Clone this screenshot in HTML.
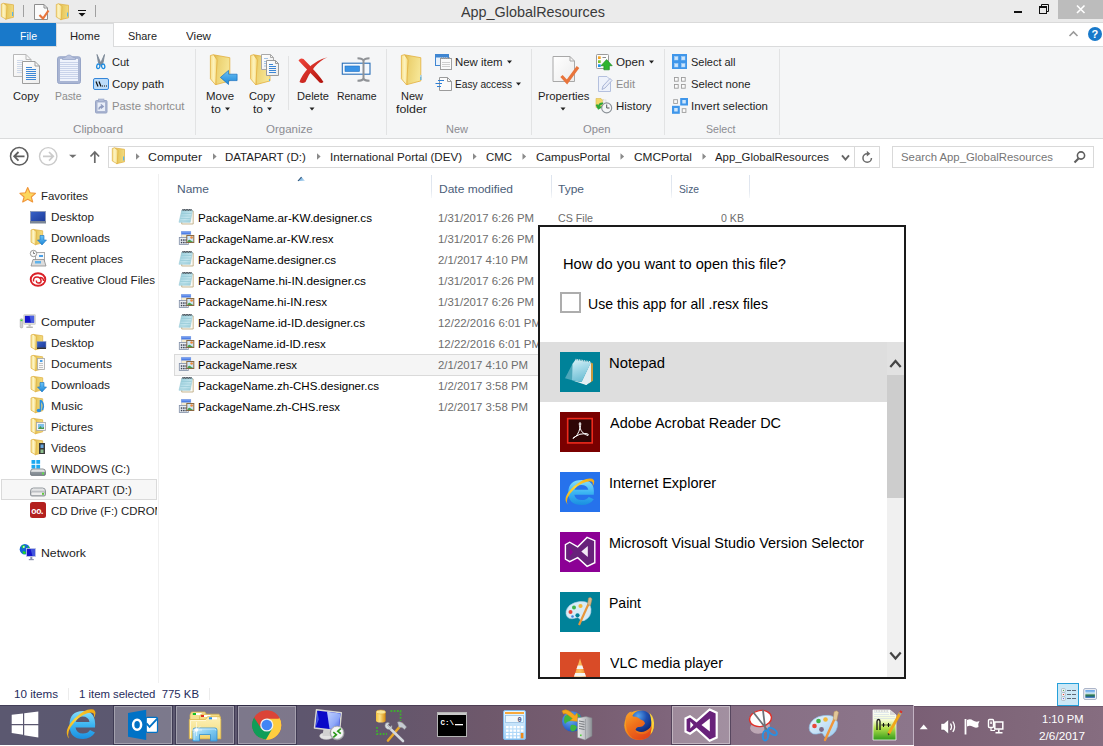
<!DOCTYPE html>
<html lang="en">
<head>
<meta charset="utf-8">
<title>App_GlobalResources</title>
<style>
html,body{margin:0;padding:0;}
body{width:1103px;height:746px;position:relative;overflow:hidden;background:#fff;font-family:"Liberation Sans",sans-serif;font-size:12px;}
.t{position:absolute;white-space:pre;line-height:20px;height:20px;transform-origin:0 50%;}
.abs{position:absolute;}
#titlebar{left:0;top:0;width:1103px;height:22px;background:#ebebeb;}
#tabrow{left:0;top:22px;width:1103px;height:25px;background:#fff;border-top:1px solid #dadada;box-sizing:border-box;}
#filetab{left:0;top:23px;width:56px;height:23px;background:#1979ca;}
#hometab{left:56px;top:23px;width:58px;height:24px;background:#f5f6f7;border:1px solid #dadbdc;border-bottom:none;box-sizing:border-box;}
#ribbon{left:0;top:46px;width:1103px;height:93px;background:#f5f6f7;border-top:1px solid #dadbdc;border-bottom:1px solid #dadbdc;box-sizing:border-box;}
.rsep{position:absolute;top:49px;width:1px;height:86px;background:#e2e3e4;}
#addrbox{left:108px;top:146px;width:772px;height:22px;border:1px solid #d9d9d9;box-sizing:border-box;background:#fff;}
#searchbox{left:892px;top:146px;width:202px;height:22px;border:1px solid #d9d9d9;box-sizing:border-box;background:#fff;}
#navsep{left:158px;top:174px;width:1px;height:509px;background:#f0f0f0;}
.hsep{position:absolute;top:175px;width:1px;height:23px;background:linear-gradient(180deg,#dde4ee 0%,#e3e8f0 70%,#f6f8fa 100%);}
#selrow{left:174px;top:354px;width:400px;height:22px;background:#f5f5f5;border:1px solid #dadada;box-sizing:border-box;}
#navsel{left:1px;top:479px;width:156px;height:21px;background:#f7f7f7;border:1px solid #dadada;box-sizing:border-box;}
#dialog{left:538px;top:225px;width:368px;height:454px;border:2px solid #1a1a1a;box-sizing:border-box;background:#fff;overflow:hidden;}
#dlgsel{left:540px;top:342px;width:347px;height:60px;background:#dedede;}
#sbtrack{left:887px;top:342px;width:17px;height:335px;background:#f0f0f0;}
#sbthumb{left:887px;top:375px;width:17px;height:123px;background:#cdcdcd;}
#sbup{left:887px;top:342px;width:17px;height:33px;background:#e1e1e1;}
#chk{left:560px;top:292px;width:21px;height:21px;border:2px solid #adadad;box-sizing:border-box;background:#fff;}
.appico{position:absolute;left:560px;width:40px;height:40px;}
#status{left:0;top:683px;width:1103px;height:22px;background:#fff;}
#taskbar{left:0;top:705px;width:914px;height:40px;background:linear-gradient(90deg,#5b5870 0%,#5c5870 20%,#5e566e 33%,#63566c 42%,#6e586b 53%,#775d71 64%,#7f657b 73%,#866e84 81%,#8b7489 94%,#8c768b 100%);}
#taskbar2{left:914px;top:706px;width:189px;height:40px;background:linear-gradient(90deg,#7a5f75 0%,#80677a 55%,#866d80 100%);}
.tbtn{position:absolute;top:706px;width:58px;height:38px;box-sizing:border-box;}
.tbtn.run{background:rgba(255,255,255,0.2);border:1px solid rgba(255,255,255,0.3);box-shadow:0 0 0 1px rgba(25,20,45,0.42);}
.tbtn.act{background:rgba(255,255,255,0.24);border:1px solid rgba(255,255,255,0.36);}
svg{position:absolute;overflow:visible;}
</style>
</head>
<body>
<div class="abs" id="titlebar"></div>
<div class="abs" id="tabrow"></div>
<div class="abs" id="ribbon"></div>
<div class="abs" id="filetab"></div>
<div class="abs" id="hometab"></div>
<div class="rsep" style="left:195px"></div>
<div class="rsep" style="left:386px"></div>
<div class="rsep" style="left:531px"></div>
<div class="rsep" style="left:664px"></div>
<div class="rsep" style="left:779px"></div>
<div class="rsep" style="left:288px;top:56px;height:54px"></div>
<svg width="110" height="23" style="left:0;top:0" viewBox="0 0 110 23">
<defs>
<linearGradient id="sfa" x1="0" y1="0" x2="1" y2="0"><stop offset="0" stop-color="#f6e08c"/><stop offset="0.450" stop-color="#fdf4c4"/><stop offset="1" stop-color="#f1d570"/></linearGradient>
<linearGradient id="sfb" x1="0" y1="0" x2="1" y2="0"><stop offset="0" stop-color="#d3ab3c"/><stop offset="0.300" stop-color="#e6c75c"/><stop offset="1" stop-color="#f2db80"/></linearGradient>
<linearGradient id="fg1" x1="0" y1="0" x2="1" y2="0"><stop offset="0" stop-color="#fdf6c5"/><stop offset="1" stop-color="#efd468"/></linearGradient>
<linearGradient id="fg2" x1="0" y1="0" x2="0" y2="1"><stop offset="0" stop-color="#f3d976"/><stop offset="1" stop-color="#dfb53e"/></linearGradient>
</defs>
<g id="tfold">
<path d="M3.500 3.400 L13.500 4.800 V17.300 L5.500 19.200 Z" fill="url(#sfb)" stroke="#dfae3e" stroke-width="0.700" stroke-linejoin="round"/>
<path d="M1.300 4 L3.500 3.300 L7 5.700 L6.200 19.300 L1.300 16.500 Z" fill="url(#sfa)" stroke="#e0b042" stroke-width="0.700" stroke-linejoin="round"/>
<rect x="12" y="12" width="1.200" height="4" fill="#5db4e6"/>
</g>
<rect x="23" y="5" width="1" height="12" fill="#a0a0a0"/>
<path d="M34.5 4.500 H44 L47.500 8 V19.500 H34.500 Z" fill="#fbfbfb" stroke="#8e8e8e" stroke-width="1"/>
<path d="M44 4.500 V8 H47.500" fill="none" stroke="#8e8e8e" stroke-width="1"/>
<path d="M39.5 15 L43 18.500 L48.500 10.500" fill="none" stroke="#e8743b" stroke-width="2.200"/>
<g transform="translate(55,0.500)">
<path d="M3.500 3.400 L13.500 4.800 V17.300 L5.500 19.200 Z" fill="url(#sfb)" stroke="#dfae3e" stroke-width="0.700" stroke-linejoin="round"/>
<path d="M1.300 4 L3.500 3.300 L7 5.700 L6.200 19.300 L1.300 16.500 Z" fill="url(#sfa)" stroke="#e0b042" stroke-width="0.700" stroke-linejoin="round"/>
<rect x="12" y="12" width="1.200" height="4" fill="#5db4e6"/>
</g>
<rect x="78" y="10" width="8" height="1" fill="#111"/>
<path d="M78.500 13 H85.500 L82 16.500 Z" fill="#111"/>
<rect x="95" y="5" width="1" height="12" fill="#a0a0a0"/>
</svg>
<div class="abs" style="left:1058px;top:0;width:45px;height:19px;background:#bcbcbc"></div>
<svg width="100" height="22" style="left:1003px;top:0" viewBox="1003 0 100 22">
<rect x="1014" y="11" width="8" height="2" fill="#111"/>
<path d="M1041.500 6.500 V4.500 H1048.500 V11.500 H1046.500" fill="none" stroke="#111" stroke-width="1"/>
<rect x="1039.500" y="6.500" width="7" height="7" fill="none" stroke="#111" stroke-width="1"/>
<rect x="1039" y="6" width="8" height="2" fill="#111"/>
<path d="M1077 5.500 L1084.500 13 M1084.500 5.500 L1077 13" stroke="#fff" stroke-width="1.600" fill="none"/>
<path d="M1069.500 36 L1073.500 32 L1077.500 36" stroke="#9a9a9a" stroke-width="1.600" fill="none" transform="translate(0,0)"/>
</svg>
<div class="abs" style="left:1088px;top:27px;width:14px;height:14px;border-radius:7px;background:#1979ca;"></div>
<span class="t" style="left:1091.500px;top:24px;font-size:11px;font-weight:700;color:#fff;">?</span>

<svg width="800" height="92" style="left:0;top:46px" viewBox="0 46 800 92">
<defs>
<linearGradient id="pg" x1="0" y1="0" x2="1" y2="1"><stop offset="0" stop-color="#ffffff"/><stop offset="1" stop-color="#ececec"/></linearGradient>
<linearGradient id="fa" x1="0" y1="0" x2="1" y2="0"><stop offset="0" stop-color="#f7e08a"/><stop offset="0.500" stop-color="#fdf3c0"/><stop offset="1" stop-color="#f3d977"/></linearGradient>
<linearGradient id="fb" x1="0" y1="0" x2="1" y2="0.300"><stop offset="0" stop-color="#d9b548"/><stop offset="0.350" stop-color="#ecd272"/><stop offset="1" stop-color="#f6e594"/></linearGradient>
<linearGradient id="ba" x1="0" y1="0" x2="0" y2="1"><stop offset="0" stop-color="#6cc3f5"/><stop offset="1" stop-color="#1d86d8"/></linearGradient>
<linearGradient id="rd" x1="0" y1="0" x2="1" y2="1"><stop offset="0" stop-color="#f0453a"/><stop offset="1" stop-color="#b0120c"/></linearGradient>
<g id="bigfolder">
<path d="M3.500 0.500 L19.800 3.400 V26.600 L6 30.300 Z" fill="url(#fb)" stroke="#e2ae3c" stroke-width="0.800" stroke-linejoin="round"/>
<path d="M0.400 1.200 L3.500 0.400 L7.100 5.600 L5.700 30.700 L0.400 24.500 Z" fill="url(#fa)" stroke="#e3b040" stroke-width="0.800" stroke-linejoin="round"/>
</g>
<g id="page16">
<path d="M0.500 0.500 H9 L12.500 4 V15.500 H0.500 Z" fill="url(#pg)" stroke="#9b9b9b"/>
<path d="M9 0.500 V4 H12.500" fill="none" stroke="#9b9b9b"/>
</g>
</defs>
<!-- Copy -->
<path d="M13.500 54.500 H26 L31 59.500 V76.500 H13.500 Z" fill="url(#pg)" stroke="#b9b9b9"/>
<path d="M26 54.500 V59.500 H31" fill="none" stroke="#b9b9b9"/>
<g stroke="#cfd9ea" stroke-width="1"><path d="M17 60.500 H23 M17 62.500 H22 M17 64.500 H22 M17 66.500 H22 M17 68.500 H22 M17 70.500 H22 M17 72.500 H22"/></g>
<path d="M22.500 61.500 H35 L39.500 66 V83.500 H22.500 Z" fill="url(#pg)" stroke="#9d9d9d"/>
<path d="M35 61.500 V66 H39.500" fill="none" stroke="#9d9d9d"/>
<g stroke="#3d87d6" stroke-width="1"><path d="M26 67.500 H32 M26 69.500 H36 M26 71.500 H36 M26 73.500 H36 M26 75.500 H36 M26 77.500 H36 M26 79.500 H36"/></g>
<!-- Paste -->
<rect x="57.500" y="56.800" width="23" height="26.700" rx="2" fill="#a9b5d3" stroke="#98a6c8"/>
<rect x="60" y="59" width="18" height="22" fill="#eff3fc"/>
<g stroke="#c9d3ea" stroke-width="1"><path d="M60 62.500 H78 M60 64.500 H78 M60 66.500 H78 M60 68.500 H78 M60 70.500 H78 M60 72.500 H78 M60 74.500 H78 M60 76.500 H78 M60 78.500 H78"/></g>
<path d="M62.500 59.500 H75.500 V58 L72.500 57 Q69 53 65.500 57 L62.500 58 Z" fill="#b9c3de" stroke="#98a6c8" stroke-width="0.800"/>
<!-- Cut -->
<path d="M97 54.500 L101.200 64 L100 65.500 L98.300 62 Z M104.500 54.500 L100.300 64 L101.500 65.500 L103.200 62 Z" fill="#7d8997" stroke="#7d8997" stroke-width="0.900" stroke-linejoin="round"/>
<ellipse cx="98.300" cy="66.300" rx="1.600" ry="2.300" fill="none" stroke="#1d8be0" stroke-width="1.300" transform="rotate(12 98.300 66.300)"/>
<ellipse cx="103.200" cy="66.300" rx="1.600" ry="2.300" fill="none" stroke="#1d8be0" stroke-width="1.300" transform="rotate(-12 103.200 66.300)"/>
<!-- Copy path -->
<rect x="93.500" y="78.500" width="15" height="11" rx="1.500" fill="#bcdcf9" stroke="#3586d9"/>
<path d="M96 81.500 L98 86.500 M99 81.500 L101 86.500" stroke="#111" stroke-width="1.200"/>
<path d="M102 86 h1 M104 86 h1 M106 86 h1" stroke="#111" stroke-width="1.200"/>
<!-- Paste shortcut -->
<rect x="95.500" y="100.500" width="11.500" height="12.500" rx="1" fill="#a9b4d0" stroke="#98a5c6"/>
<rect x="97.500" y="102.500" width="7.500" height="8.500" fill="#e9eef8"/>
<rect x="98.500" y="99" width="5.500" height="2.500" fill="#b4bed8" stroke="#98a5c6" stroke-width="0.600"/>
<path d="M99 109.500 Q99 106.500 102.500 106.500 M100.800 104.500 L103.200 106.500 L100.800 108.500" stroke="#8f9cbf" stroke-width="1.400" fill="none"/>
<!-- Move to -->
<use href="#bigfolder" x="210" y="54.300"/>
<path d="M237.100 74.200 H228.500 V70.400 L220.400 77.400 L228.500 84.500 V80.600 H237.100 Z" fill="url(#ba)" stroke="#1670c0" stroke-width="0.700"/>
<!-- Copy to -->
<use href="#bigfolder" x="250.200" y="54.300"/>
<path d="M261.500 54.500 H270.500 L273.500 57.500 V69.500 H261.500 Z" fill="url(#pg)" stroke="#a9a9a9"/>
<path d="M270.500 54.500 V57.500 H273.500" fill="none" stroke="#a9a9a9"/>
<path d="M264 58.500 H268 M264 61.500 H266 M264 63.500 H266 M264 66 H266" stroke="#8db4e0" stroke-width="0.800"/>
<path d="M266.500 60.500 H275.500 L278.500 63.500 V75.500 H266.500 Z" fill="url(#pg)" stroke="#9b9b9b"/>
<path d="M275.500 60.500 V63.500 H278.500" fill="none" stroke="#9b9b9b"/>
<g stroke="#3d87d6" stroke-width="1"><path d="M269 64.500 H273 M269 66.500 H276 M269 68.500 H276 M269 70.500 H276 M269 72.500 H276"/></g>
<rect x="269" y="79" width="1" height="2" fill="#5db4e6"/>
<!-- arrows for to -->
<path d="M225 107.500 h5 l-2.500 3 Z" fill="#222"/>
<path d="M267 107.500 h5 l-2.500 3 Z" fill="#222"/>
<path d="M309.500 107.500 h5 l-2.500 3 Z" fill="#222"/>
<path d="M560.500 107.500 h5 l-2.500 3 Z" fill="#222"/>
<path d="M507 60.500 h5 l-2.500 3 Z" fill="#222"/>
<path d="M516 82.500 h5 l-2.500 3 Z" fill="#222"/>
<path d="M649 60.500 h5 l-2.500 3 Z" fill="#222"/>
<!-- Delete -->
<path d="M298.500 60.500 Q300.500 57.500 303.500 59 Q311 66.500 317 73.500 Q320.500 77.500 323.500 82 Q321.500 83.500 319.500 82.500 Q314 76.500 309 71.500 Q303 65.500 298.500 60.500 Z" fill="url(#rd)"/>
<path d="M327.500 57.200 Q320 60.500 314.500 67 Q308.500 74.500 305.500 82 Q302.500 84 299.500 82 Q301.500 75.500 308 68.500 Q316 60 327.500 57.200 Z" fill="url(#rd)"/>
<!-- Rename -->
<rect x="342.300" y="63.200" width="27.700" height="11" fill="#f4f9fe" stroke="#2a6fb8" stroke-width="1.100"/>
<rect x="345" y="66" width="14.500" height="5.500" fill="#3a93e6" stroke="#1f6fc0" stroke-width="0.600"/>
<path d="M357.500 58.200 Q362.500 58.200 363.500 60.500 Q364.500 58.200 369.500 58.200 M363.500 60 V79 M357.500 80.800 Q362.500 80.800 363.500 78.500 Q364.500 80.800 369.500 80.800" fill="none" stroke="#8f9296" stroke-width="2"/>
<!-- New folder -->
<use href="#bigfolder" x="401" y="54.300"/>
<rect x="420.200" y="75" width="1.300" height="5" fill="#5db4e6"/>
<rect x="420.400" y="75" width="0.900" height="2" fill="#fff" opacity="0.700"/>
<!-- New item -->
<rect x="435.500" y="54.500" width="13" height="11" fill="#e9f2fc" stroke="#3f86d2"/>
<rect x="436" y="55" width="12" height="2.500" fill="#3f86d2"/>
<rect x="440.500" y="58.500" width="11" height="11" fill="#fbfbfb" stroke="#a0a0a0"/>
<path d="M440.500 58.500 q1 -2 2 0 q1 -2 2 0 q1 -2 2 0 q1 -2 2 0 q1 -2 2 0" fill="none" stroke="#8d8d8d" stroke-width="0.800"/>
<g stroke="#d0d0d0"><path d="M442 62.500 H450 M442 64.500 H450 M442 66.500 H450"/></g>
<!-- Easy access -->
<path d="M439.500 77.500 H447.500 L451.500 81.500 V90.500 H439.500 Z" fill="#fbfbfb" stroke="#9b9b9b"/>
<path d="M447.500 77.500 V81.500 H451.500" fill="none" stroke="#9b9b9b"/>
<path d="M438 80.500 H444 M435.500 83.500 H442 M437 86.500 H441" stroke="#2d7fd6" stroke-width="1.200"/>
<!-- Properties -->
<path d="M553 56.500 H570 L574.500 61 V81.500 H553 Z" fill="url(#pg)" stroke="#a8a8a8"/>
<path d="M570 56.500 V61 H574.500" fill="none" stroke="#a8a8a8"/>
<path d="M561.500 76 L567 82 L578 67" fill="none" stroke="#e8743b" stroke-width="3.200"/>
<!-- Open -->
<rect x="596.500" y="54.500" width="12" height="14" rx="0.800" fill="#fcfcfc" stroke="#9a9a9a"/>
<rect x="598" y="56.300" width="2.700" height="2.700" fill="#f5a623"/><rect x="598" y="60.300" width="2.700" height="2.700" fill="#7cc02a"/><rect x="598" y="64.300" width="2.700" height="2.700" fill="#1f93ea"/>
<path d="M602.500 57.500 H606" stroke="#8a8a8a"/>
<path d="M606.600 59.600 L612.200 65.700 H609.300 V69.800 H603.900 V65.700 H601 Z" fill="#2fb52f" stroke="#1f8a25" stroke-width="0.700" stroke-linejoin="round"/>
<!-- Edit -->
<path d="M598.500 76.500 H607 L610.500 80 V91.500 H598.500 Z" fill="#eef2fb" stroke="#b4c0de"/>
<path d="M602 89.500 L603 86 L610 78.500 L612 80.500 L605 88 Z" fill="#e9edf8" stroke="#a3afd2" stroke-width="0.900"/>
<!-- History -->
<path d="M596 98.500 H601 L602 100 H604 V107.500 H596 Z" fill="#f3d76a" stroke="#dcb848" stroke-width="0.600"/>
<rect x="603" y="100" width="3" height="4" fill="#f4f4f4" stroke="#cfcfcf" stroke-width="0.500"/>
<path d="M603 103.500 Q599.500 103 598.500 107 M596.500 104.500 L598.500 108.500 L602 106.500" fill="none" stroke="#2fa83a" stroke-width="1.900"/>
<circle cx="606.700" cy="107.900" r="5" fill="#f4f6f8" stroke="#8a9096" stroke-width="1.100"/>
<path d="M606.700 104.500 V108 H609.500" fill="none" stroke="#555" stroke-width="1"/>
<!-- Select all -->
<rect x="672" y="54" width="15" height="15" fill="#3f96ea"/>
<g fill="#cfe6fb" stroke="#a5d0f7" stroke-width="0.500"><rect x="674.500" y="56.500" width="3.500" height="3.500"/><rect x="681.500" y="56.500" width="3.500" height="3.500"/><rect x="674.500" y="63.500" width="3.500" height="3.500"/><rect x="681.500" y="63.500" width="3.500" height="3.500"/></g>
<!-- Select none -->
<g fill="#fbfbfb" stroke="#9c9c9c" stroke-width="0.900">
<rect x="674.500" y="77.500" width="3.700" height="3.700"/><rect x="681.500" y="77.500" width="3.700" height="3.700"/><rect x="674.500" y="84.500" width="3.700" height="3.700"/><rect x="681.500" y="84.500" width="3.700" height="3.700"/>
</g>
<!-- Invert selection -->
<rect x="680.200" y="98" width="7.800" height="7.500" fill="#3f96ea"/><rect x="682.300" y="100" width="3.500" height="3.500" fill="#cfe6fb"/>
<rect x="672" y="105.800" width="7.800" height="8" fill="#3f96ea"/><rect x="674.200" y="108" width="3.500" height="3.500" fill="#cfe6fb"/>
<g fill="#fbfbfb" stroke="#9c9c9c" stroke-width="0.900"><rect x="673.700" y="99.700" width="3.700" height="3.700"/><rect x="682.200" y="108.700" width="3.700" height="3.700"/></g>
</svg>

<span class="t top" style="left:461px;top:2.0px;font-size:14.5px;color:#3a3a3a;transform:scaleX(0.9925);">App_GlobalResources</span>
<span class="t top" style="left:19.5px;top:26.0px;font-size:11.5px;color:#fff;transform:scaleX(0.9174);">File</span>
<span class="t top" style="left:70px;top:26.0px;font-size:11.5px;color:#1e1e1e;transform:scaleX(0.9776);">Home</span>
<span class="t top" style="left:128px;top:26.0px;font-size:11.5px;color:#1e1e1e;transform:scaleX(0.9450);">Share</span>
<span class="t top" style="left:186px;top:26.0px;font-size:11.5px;color:#1e1e1e;transform:scaleX(1.0114);">View</span>
<span class="t rib" style="left:13px;top:86.0px;font-size:11.5px;color:#1e1e1e;transform:scaleX(0.9680);">Copy</span>
<span class="t rib" style="left:55px;top:86.0px;font-size:11.5px;color:#8d8d8d;transform:scaleX(0.9007);">Paste</span>
<span class="t rib" style="left:111.8px;top:52.0px;font-size:11.5px;color:#1e1e1e;transform:scaleX(0.9606);">Cut</span>
<span class="t rib" style="left:111.8px;top:74.0px;font-size:11.5px;color:#1e1e1e;transform:scaleX(0.9955);">Copy path</span>
<span class="t rib" style="left:111.8px;top:96.0px;font-size:11.5px;color:#8d8d8d;transform:scaleX(0.9862);">Paste shortcut</span>
<span class="t rib" style="left:72.5px;top:119.0px;font-size:11.5px;color:#8c8c92;transform:scaleX(1.0156);">Clipboard</span>
<span class="t rib" style="left:206px;top:86.0px;font-size:11.5px;color:#1e1e1e;transform:scaleX(0.9956);">Move</span>
<span class="t rib" style="left:211px;top:99.0px;font-size:11.5px;color:#1e1e1e;transform:scaleX(1.0423);">to</span>
<span class="t rib" style="left:249px;top:86.0px;font-size:11.5px;color:#1e1e1e;transform:scaleX(0.9680);">Copy</span>
<span class="t rib" style="left:253px;top:99.0px;font-size:11.5px;color:#1e1e1e;transform:scaleX(1.0423);">to</span>
<span class="t rib" style="left:296.5px;top:86.0px;font-size:11.5px;color:#1e1e1e;transform:scaleX(0.9624);">Delete</span>
<span class="t rib" style="left:337px;top:86.0px;font-size:11.5px;color:#1e1e1e;transform:scaleX(0.9087);">Rename</span>
<span class="t rib" style="left:266px;top:119.0px;font-size:11.5px;color:#8c8c92;">Organize</span>
<span class="t rib" style="left:401px;top:86.0px;font-size:11.5px;color:#1e1e1e;transform:scaleX(0.9559);">New</span>
<span class="t rib" style="left:395.7px;top:99.0px;font-size:11.5px;color:#1e1e1e;transform:scaleX(1.0771);">folder</span>
<span class="t rib" style="left:454.7px;top:52.0px;font-size:11.5px;color:#1e1e1e;transform:scaleX(0.9909);">New item</span>
<span class="t rib" style="left:454.7px;top:74.0px;font-size:11.5px;color:#1e1e1e;transform:scaleX(0.8829);">Easy access</span>
<span class="t rib" style="left:446px;top:119.0px;font-size:11.5px;color:#8c8c92;transform:scaleX(0.9559);">New</span>
<span class="t rib" style="left:538px;top:86.0px;font-size:11.5px;color:#1e1e1e;transform:scaleX(0.9824);">Properties</span>
<span class="t rib" style="left:615.5px;top:52.0px;font-size:11.5px;color:#1e1e1e;transform:scaleX(1.0128);">Open</span>
<span class="t rib" style="left:615.5px;top:74.0px;font-size:11.5px;color:#8d8d8d;transform:scaleX(0.9582);">Edit</span>
<span class="t rib" style="left:615.5px;top:96.0px;font-size:11.5px;color:#1e1e1e;transform:scaleX(0.9921);">History</span>
<span class="t rib" style="left:583px;top:119.0px;font-size:11.5px;color:#8c8c92;transform:scaleX(0.9772);">Open</span>
<span class="t rib" style="left:691.4px;top:52.0px;font-size:11.5px;color:#1e1e1e;transform:scaleX(0.9535);">Select all</span>
<span class="t rib" style="left:691.4px;top:74.0px;font-size:11.5px;color:#1e1e1e;transform:scaleX(0.9794);">Select none</span>
<span class="t rib" style="left:691.4px;top:96.0px;font-size:11.5px;color:#1e1e1e;transform:scaleX(0.9954);">Invert selection</span>
<span class="t rib" style="left:706.3px;top:119.0px;font-size:11.5px;color:#8c8c92;transform:scaleX(0.9228);">Select</span>
<div class="abs" id="addrbox"></div>
<div class="abs" id="searchbox"></div>
<svg width="1103" height="34" style="left:0;top:140px" viewBox="0 140 1103 34">
<circle cx="19.200" cy="156.300" r="8.700" fill="none" stroke="#5e5e5e" stroke-width="1.500"/>
<path d="M24.500 156.300 H14.500 M18.500 152 L14.200 156.300 L18.500 160.600" fill="none" stroke="#5e5e5e" stroke-width="1.800"/>
<circle cx="48.200" cy="156.300" r="8.700" fill="none" stroke="#cbcbcb" stroke-width="1.400"/>
<path d="M43 156.300 H53 M49 152 L53.300 156.300 L49 160.600" fill="none" stroke="#cbcbcb" stroke-width="1.700"/>
<path d="M69 154.800 H76.500 L72.750 158 Z" fill="#707070"/>
<path d="M94.800 163 V152.500 M90.500 156.500 L94.800 152 L99.100 156.500" fill="none" stroke="#6a6a6a" stroke-width="1.700"/>
<g transform="translate(111,144.500)">
<path d="M3.500 3.400 L13.500 4.800 V17.300 L5.500 19.200 Z" fill="url(#sfb)" stroke="#dfae3e" stroke-width="0.700" stroke-linejoin="round"/>
<path d="M1.300 4 L3.500 3.300 L7 5.700 L6.200 19.300 L1.300 16.500 Z" fill="url(#sfa)" stroke="#e0b042" stroke-width="0.700" stroke-linejoin="round"/>
<rect x="12" y="12" width="1.200" height="4" fill="#5db4e6"/>
</g>
<g fill="#8a8a8a">
<path d="M136.000 153.300 L139.600 156.500 L136.000 159.700 Z"/>
<path d="M213.000 153.300 L216.600 156.500 L213.000 159.700 Z"/>
<path d="M317.000 153.300 L320.600 156.500 L317.000 159.700 Z"/>
<path d="M473.000 153.300 L476.600 156.500 L473.000 159.700 Z"/>
<path d="M522.500 153.300 L526.100 156.500 L522.500 159.700 Z"/>
<path d="M620.500 153.300 L624.100 156.500 L620.500 159.700 Z"/>
<path d="M702.500 153.300 L706.100 156.500 L702.500 159.700 Z"/>
</g>
<path d="M842 155.300 L845.500 159.600 L849 155.300" fill="none" stroke="#666" stroke-width="1.900"/>
<rect x="854" y="147" width="1" height="20" fill="#d9d9d9"/>
<path d="M867.200 153.700 A4.250 4.250 0 1 0 871.450 157.950" fill="none" stroke="#6a6a6a" stroke-width="1.500"/>
<path d="M866.800 150.800 L870.300 153.700 L866.800 156.600 Z" fill="#6a6a6a"/>
<circle cx="1081" cy="155.500" r="3.600" fill="none" stroke="#5e5e5e" stroke-width="1.600"/>
<path d="M1078.500 158.500 L1074.500 162.500" stroke="#5e5e5e" stroke-width="2.200"/>
</svg>

<span class="t addr" style="left:148px;top:147.0px;font-size:11.5px;color:#1e1e1e;transform:scaleX(1.0693);">Computer</span>
<span class="t addr" style="left:225px;top:147.0px;font-size:11.5px;color:#1e1e1e;">DATAPART (D:)</span>
<span class="t addr" style="left:330px;top:147.0px;font-size:11.5px;color:#1e1e1e;transform:scaleX(1.0073);">International Portal (DEV)</span>
<span class="t addr" style="left:486px;top:147.0px;font-size:11.5px;color:#1e1e1e;transform:scaleX(0.9922);">CMC</span>
<span class="t addr" style="left:536px;top:147.0px;font-size:11.5px;color:#1e1e1e;transform:scaleX(1.0154);">CampusPortal</span>
<span class="t addr" style="left:634px;top:147.0px;font-size:11.5px;color:#1e1e1e;transform:scaleX(1.0314);">CMCPortal</span>
<span class="t addr" style="left:715px;top:147.0px;font-size:11.5px;color:#1e1e1e;transform:scaleX(0.9906);">App_GlobalResources</span>
<span class="t addr" style="left:901px;top:147.0px;font-size:11.5px;color:#767676;transform:scaleX(0.9865);">Search App_GlobalResources</span>
<div class="abs" id="navsep"></div>
<div class="abs" id="navsel"></div>
<svg width="158" height="400" style="left:0;top:180px" viewBox="0 180 158 400">
<defs>
<g id="sf">
<path d="M2.500 0.400 L12 1.800 V13.800 L4.500 15.800 Z" fill="url(#sfb)" stroke="#dfae3e" stroke-width="0.700" stroke-linejoin="round"/>
<path d="M0.300 1 L2.500 0.300 L5.800 2.600 L5 15.800 L0.300 13.200 Z" fill="url(#sfa)" stroke="#e0b042" stroke-width="0.700" stroke-linejoin="round"/>
</g>
<linearGradient id="dsk" x1="0" y1="0" x2="1" y2="1"><stop offset="0" stop-color="#3a63c8"/><stop offset="1" stop-color="#1c3a9a"/></linearGradient>
<linearGradient id="drv" x1="0" y1="0" x2="0" y2="1"><stop offset="0" stop-color="#f4f4f4"/><stop offset="1" stop-color="#9da3a8"/></linearGradient>
<g id="darrow"><path d="M2.500 0 H6.500 V4.500 H9 L4.500 9.500 L0 4.500 H2.500 Z" fill="url(#ba)" stroke="#1670c0" stroke-width="0.600"/></g>
</defs>
<!-- star -->
<path d="M27.700 187.500 L30 192.800 L35.500 193.300 L31.300 197 L32.700 202 L27.700 199.200 L22.700 202 L24.100 197 L19.900 193.300 L25.400 192.800 Z" fill="#fcd75e" stroke="#f0963a" stroke-width="1.100" stroke-linejoin="round"/>
<!-- desktop -->
<rect x="30.500" y="211.500" width="15" height="10" fill="url(#dsk)" stroke="#8a97b5" stroke-width="0.800"/>
<rect x="30" y="221" width="16" height="2.500" fill="#7b8696"/>
<!-- downloads -->
<use href="#sf" x="30.700" y="229"/>
<use href="#darrow" x="37.500" y="235.500"/>
<!-- recent places -->
<rect x="35.500" y="252.500" width="9" height="9" fill="#f7f7f7" stroke="#a9a9a9"/>
<rect x="39" y="255" width="4" height="2" fill="#4aa0e8"/>
<path d="M31 266 L33 259.500 H44 L46 266 Z" fill="#dcdcdc" stroke="#8c8c8c" stroke-width="0.800"/>
<rect x="35" y="261" width="6" height="2.500" fill="#5fb2ea"/>
<circle cx="33.500" cy="253.500" r="3.200" fill="#fafafa" stroke="#8d8d8d" stroke-width="0.900"/>
<path d="M33.500 251.500 V253.500 H35" fill="none" stroke="#666" stroke-width="0.800"/>
<!-- creative cloud -->
<ellipse cx="38" cy="279.500" rx="7.300" ry="6.300" fill="none" stroke="#da1f26" stroke-width="1.900"/>
<path d="M33.500 281.500 Q33 277 37 277 Q40.500 277 41 280.500 Q41.500 283 38.500 283 Q36 283 36.500 280.500" fill="none" stroke="#da1f26" stroke-width="1.500"/>
<path d="M40 277.500 Q43.500 277.500 43.500 281" fill="none" stroke="#da1f26" stroke-width="1.400"/>
<!-- computer -->
<rect x="23.700" y="314.500" width="11.800" height="10" rx="0.800" fill="#dcdcd6" stroke="#c6c6c0" stroke-width="0.500"/>
<rect x="24.900" y="315.800" width="9.200" height="7" fill="#1414cc"/>
<path d="M29.500 315.800 H34.100 V322.800 H31 Z" fill="#5f7fe8" opacity="0.700"/>
<rect x="28.500" y="324.500" width="2.200" height="2" fill="#c4c4c0"/>
<rect x="26.200" y="326.400" width="6.800" height="1.500" rx="0.700" fill="#b9b9b5"/>
<rect x="20.200" y="318.700" width="2.600" height="9.200" rx="1" fill="#cfcfcf" stroke="#9a9a9a" stroke-width="0.500"/>
<rect x="20.600" y="319.600" width="1.800" height="1.500" fill="#2fe02f"/>
<!-- desktop folder -->
<use href="#sf" x="30.700" y="334"/>
<rect x="37" y="341.500" width="9" height="6.500" fill="url(#dsk)" stroke="#8a97b5" stroke-width="0.500"/>
<rect x="37" y="347.500" width="9" height="1.500" fill="#333"/>
<!-- documents -->
<use href="#sf" x="30.700" y="355"/>
<rect x="37.500" y="358.500" width="7" height="11" fill="#f8f8f8" stroke="#a5a5a5" stroke-width="0.800"/>
<path d="M39 363.500 H43 M39 365.500 H43 M39 367.500 H43" stroke="#b5b5b5" stroke-width="0.800"/>
<rect x="40" y="360" width="2.500" height="2" fill="#4a9de6"/>
<!-- downloads -->
<use href="#sf" x="30.700" y="376"/>
<use href="#darrow" x="37.500" y="382.500"/>
<!-- music -->
<use href="#sf" x="30.700" y="397"/>
<path d="M40.500 400 Q45 404 42.500 410 M40.500 400 V410" fill="none" stroke="#2b8fe0" stroke-width="1.600"/>
<ellipse cx="39" cy="410.500" rx="2.300" ry="1.800" fill="#2b8fe0"/>
<!-- pictures -->
<use href="#sf" x="30.700" y="418"/>
<rect x="36.500" y="422.500" width="9" height="8" fill="#f4f4f4" stroke="#a5a5a5" stroke-width="0.800"/>
<rect x="38" y="424" width="6" height="5" fill="#7fc0ea"/>
<path d="M38 429 L40.500 426 L42 428 L44 427 V429 Z" fill="#4c9a4c"/>
<!-- videos -->
<use href="#sf" x="30.700" y="439"/>
<rect x="39" y="443" width="6" height="11" fill="#3a3a3a"/>
<rect x="40.500" y="444.500" width="3" height="3.500" fill="#6aa6de"/><rect x="40.500" y="449.500" width="3" height="3.500" fill="#8fc08f"/>
<!-- windows c -->
<g fill="#19a8f0"><rect x="31.500" y="460" width="3.800" height="3.800"/><rect x="36.300" y="460" width="3.800" height="3.800"/><rect x="31.500" y="464.800" width="3.800" height="3.800"/><rect x="36.300" y="464.800" width="3.800" height="3.800"/></g>
<path d="M30.500 472 Q30.500 469 33 469 H43 Q45.500 469 45.500 472 V474 Q45.500 475.500 44 475.500 H32 Q30.500 475.500 30.500 474 Z" fill="url(#drv)" stroke="#6f767d" stroke-width="0.800"/>
<rect x="30.800" y="472" width="14.400" height="3" fill="#5f6a74" opacity="0.550"/>
<rect x="42" y="472.500" width="2" height="2" fill="#5fe04a"/>
<!-- datapart -->
<path d="M30.500 491 Q30.500 488 33.500 488 H42.500 Q45.500 488 45.500 491 V494.500 Q45.500 496 44 496 H32 Q30.500 496 30.500 494.500 Z" fill="url(#drv)" stroke="#7c8389" stroke-width="0.800"/>
<rect x="31" y="492" width="14" height="3.500" rx="1" fill="#eeeeee" stroke="#8a8f94" stroke-width="0.500"/>
<rect x="42" y="492.800" width="2" height="2" fill="#5fc83a"/>
<!-- cd drive -->
<rect x="30" y="502" width="16" height="16" rx="2.500" fill="#b3201e"/>
<text x="31.300" y="513.500" font-family="Liberation Sans, sans-serif" font-size="8.500" font-weight="700" fill="#fff" letter-spacing="-0.300">oo.</text>
<!-- network -->
<circle cx="24.900" cy="549.200" r="5.200" fill="#1565d8"/>
<path d="M21.500 546.500 Q23 544.500 25.500 545.500 Q25 548 22.500 548.500 Z M22.500 551.500 Q24.500 550.500 26 552.500 Q25.500 554 24 554.200 Q22.500 553.500 22.500 551.500 Z M27.500 546 Q29 546.500 29.500 548 L28 548 Z" fill="#22dd22"/>
<circle cx="23.800" cy="547" r="1" fill="#e8fbff" opacity="0.800"/>
<rect x="26.500" y="548.500" width="9" height="8" fill="#1414cc" stroke="#c3cae2" stroke-width="0.800"/>
<path d="M30.500 549 H35 V556 H32.500 Z" fill="#5f7fe8" opacity="0.600"/>
<rect x="30.300" y="557" width="2" height="2.200" fill="#8a93b0"/>
<rect x="28.800" y="559" width="5" height="1.200" fill="#8a93b0"/>
</svg>

<div class="abs" style="left:0;top:0;width:157px;height:700px;overflow:hidden">
<span class="t nav" style="left:41px;top:186.0px;font-size:11.5px;color:#1e1e1e;transform:scaleX(0.9937);">Favorites</span>
<span class="t nav" style="left:51px;top:207.0px;font-size:11.5px;color:#1e1e1e;transform:scaleX(1.0193);">Desktop</span>
<span class="t nav" style="left:51px;top:228.0px;font-size:11.5px;color:#1e1e1e;transform:scaleX(1.0368);">Downloads</span>
<span class="t nav" style="left:51px;top:249.0px;font-size:11.5px;color:#1e1e1e;transform:scaleX(0.9880);">Recent places</span>
<span class="t nav" style="left:51px;top:270.0px;font-size:11.5px;color:#1e1e1e;transform:scaleX(1.0044);">Creative Cloud Files</span>
<span class="t nav" style="left:41px;top:312.0px;font-size:11.5px;color:#1e1e1e;transform:scaleX(1.0693);">Computer</span>
<span class="t nav" style="left:51px;top:333.0px;font-size:11.5px;color:#1e1e1e;transform:scaleX(1.0193);">Desktop</span>
<span class="t nav" style="left:51px;top:354.0px;font-size:11.5px;color:#1e1e1e;transform:scaleX(1.0486);">Documents</span>
<span class="t nav" style="left:51px;top:375.0px;font-size:11.5px;color:#1e1e1e;transform:scaleX(1.0368);">Downloads</span>
<span class="t nav" style="left:51px;top:396.0px;font-size:11.5px;color:#1e1e1e;transform:scaleX(1.0656);">Music</span>
<span class="t nav" style="left:51px;top:417.0px;font-size:11.5px;color:#1e1e1e;transform:scaleX(1.0109);">Pictures</span>
<span class="t nav" style="left:51px;top:438.0px;font-size:11.5px;color:#1e1e1e;">Videos</span>
<span class="t nav" style="left:51px;top:459.0px;font-size:11.5px;color:#1e1e1e;transform:scaleX(0.9816);">WINDOWS (C:)</span>
<span class="t nav" style="left:51px;top:480.0px;font-size:11.5px;color:#1e1e1e;">DATAPART (D:)</span>
<span class="t nav" style="left:51px;top:501.0px;font-size:11.5px;color:#1e1e1e;transform:scaleX(0.9881);">CD Drive (F:) CDROM</span>
<span class="t nav" style="left:41px;top:543.0px;font-size:11.5px;color:#1e1e1e;transform:scaleX(1.0667);">Network</span>
</div>
<div class="hsep" style="left:431px"></div>
<div class="hsep" style="left:551px"></div>
<div class="hsep" style="left:671px"></div>
<div class="hsep" style="left:749px"></div>
<div class="abs" id="selrow"></div>
<svg width="20" height="220" style="left:176px;top:205px" viewBox="176 205 20 220">
<defs>
<linearGradient id="np" x1="0" y1="0" x2="1" y2="1"><stop offset="0" stop-color="#94cbd9"/><stop offset="0.6" stop-color="#c2e4ed"/><stop offset="1" stop-color="#9ed1dd"/></linearGradient>
<g id="ics">
<path d="M3.500 2 H14.500 V15 H3 Z" fill="#fbfaf4" stroke="#b9a57a" stroke-width="0.800"/>
<path d="M3 1.500 H13.800 L11.500 13.300 H0.300 Z" fill="url(#np)" stroke="#8cc3d1" stroke-width="0.500"/>
<path d="M2.600 4.500 H12.800 M2.100 7 H12.300 M1.600 9.500 H11.800 M1.100 12 H11.300" stroke="#93c9d6" stroke-width="0.700"/>
<path d="M3.500 1.500 l0.800 -1.300 l0.800 1.300 l0.800 -1.300 l0.800 1.300 l0.800 -1.300 l0.800 1.300 l0.800 -1.300 l0.800 1.300 l0.800 -1.300 l0.800 1.300 l0.800 -1.300 l0.800 1.300" fill="none" stroke="#2f3a45" stroke-width="0.900"/>
</g>
<g id="iresx">
<rect x="2.500" y="0.500" width="9.500" height="9" fill="#f4ecd0" stroke="#b8c4dc" stroke-width="0.600"/>
<rect x="2.500" y="0.500" width="9.500" height="3" fill="#4f7fe6"/>
<rect x="2.500" y="0.500" width="9.500" height="1.200" fill="#7aa2f2"/>
<rect x="0.500" y="6.500" width="9" height="7" fill="#e9edf3" stroke="#7f8da6" stroke-width="0.800"/>
<g fill="#3b4252"><rect x="2" y="8.300" width="1.500" height="1.500"/><rect x="4.300" y="8.300" width="1.500" height="1.500"/><rect x="6.600" y="8.300" width="1.500" height="1.500"/><rect x="2" y="10.800" width="1.500" height="1.500"/><rect x="4.300" y="10.800" width="1.500" height="1.500"/><rect x="6.600" y="10.800" width="1.500" height="1.500"/></g>
<rect x="8" y="4.500" width="7" height="7" fill="#cfe6f7" stroke="#8a6a42" stroke-width="1"/>
<circle cx="12.800" cy="6.500" r="1.300" fill="#f08a3a"/>
<path d="M8.500 11 Q10 7.500 12 9.500 Q13 10 14.500 11 Z" fill="#4aa04a"/>
</g>
</defs>
<use href="#ics" x="178.700" y="209"/>
<use href="#iresx" x="178.800" y="231"/>
<use href="#ics" x="178.700" y="251"/>
<use href="#ics" x="178.700" y="272"/>
<use href="#iresx" x="178.800" y="294"/>
<use href="#ics" x="178.700" y="314"/>
<use href="#iresx" x="178.800" y="336"/>
<use href="#iresx" x="178.800" y="357"/>
<use href="#ics" x="178.700" y="377"/>
<use href="#iresx" x="178.800" y="399"/>
</svg>
<svg width="10" height="6" style="left:297px;top:176px" viewBox="297 176 10 6"><defs><linearGradient id="sarr" x1="0" y1="0" x2="1" y2="1"><stop offset="0" stop-color="#3f8fd0"/><stop offset="1" stop-color="#cfe6f7"/></linearGradient></defs><path d="M298 181 L301.500 177 L305 181 Z" fill="url(#sarr)"/><path d="M298 181 L301.500 177" stroke="#2b4f73" stroke-width="1.100"/></svg>

<span class="t list" style="left:177px;top:179.0px;font-size:11.5px;color:#4c607a;transform:scaleX(1.0428);">Name</span>
<span class="t list" style="left:438.5px;top:179.0px;font-size:11.5px;color:#4c607a;transform:scaleX(1.0427);">Date modified</span>
<span class="t list" style="left:558px;top:179.0px;font-size:11.5px;color:#4c607a;transform:scaleX(1.0426);">Type</span>
<span class="t list" style="left:678.5px;top:179.0px;font-size:11.5px;color:#4c607a;transform:scaleX(0.8939);">Size</span>
<span class="t list" style="left:198px;top:208.0px;font-size:11.5px;color:#000;transform:scaleX(1.0119);">PackageName.ar-KW.designer.cs</span>
<span class="t list" style="left:438px;top:208.0px;font-size:11.5px;color:#6d6d6d;transform:scaleX(0.9878);">1/31/2017 6:26 PM</span>
<span class="t list" style="left:198px;top:229.0px;font-size:11.5px;color:#000;">PackageName.ar-KW.resx</span>
<span class="t list" style="left:438px;top:229.0px;font-size:11.5px;color:#6d6d6d;transform:scaleX(0.9878);">1/31/2017 6:26 PM</span>
<span class="t list" style="left:198px;top:250.0px;font-size:11.5px;color:#000;transform:scaleX(1.0087);">PackageName.designer.cs</span>
<span class="t list" style="left:438px;top:250.0px;font-size:11.5px;color:#6d6d6d;transform:scaleX(0.9912);">2/1/2017 4:10 PM</span>
<span class="t list" style="left:198px;top:271.0px;font-size:11.5px;color:#000;transform:scaleX(1.0226);">PackageName.hi-IN.designer.cs</span>
<span class="t list" style="left:438px;top:271.0px;font-size:11.5px;color:#6d6d6d;transform:scaleX(0.9878);">1/31/2017 6:26 PM</span>
<span class="t list" style="left:198px;top:292.0px;font-size:11.5px;color:#000;transform:scaleX(1.0092);">PackageName.hi-IN.resx</span>
<span class="t list" style="left:438px;top:292.0px;font-size:11.5px;color:#6d6d6d;transform:scaleX(0.9878);">1/31/2017 6:26 PM</span>
<span class="t list" style="left:198px;top:313.0px;font-size:11.5px;color:#000;transform:scaleX(1.0165);">PackageName.id-ID.designer.cs</span>
<span class="t list" style="left:438px;top:313.0px;font-size:11.5px;color:#6d6d6d;transform:scaleX(0.9943);">12/22/2016 6:01 PM</span>
<span class="t list" style="left:198px;top:334.0px;font-size:11.5px;color:#000;">PackageName.id-ID.resx</span>
<span class="t list" style="left:438px;top:334.0px;font-size:11.5px;color:#6d6d6d;transform:scaleX(0.9943);">12/22/2016 6:01 PM</span>
<span class="t list" style="left:198px;top:355.0px;font-size:11.5px;color:#000;transform:scaleX(0.9865);">PackageName.resx</span>
<span class="t list" style="left:438px;top:355.0px;font-size:11.5px;color:#6d6d6d;transform:scaleX(0.9912);">2/1/2017 4:10 PM</span>
<span class="t list" style="left:198px;top:376.0px;font-size:11.5px;color:#000;transform:scaleX(1.0042);">PackageName.zh-CHS.designer.cs</span>
<span class="t list" style="left:438px;top:376.0px;font-size:11.5px;color:#6d6d6d;transform:scaleX(0.9912);">1/2/2017 3:58 PM</span>
<span class="t list" style="left:198px;top:397.0px;font-size:11.5px;color:#000;transform:scaleX(0.9874);">PackageName.zh-CHS.resx</span>
<span class="t list" style="left:438px;top:397.0px;font-size:11.5px;color:#6d6d6d;transform:scaleX(0.9912);">1/2/2017 3:58 PM</span>
<span class="t list" style="left:558px;top:208.0px;font-size:11.5px;color:#6d6d6d;transform:scaleX(0.9283);">CS File</span>
<span class="t list" style="left:721px;top:208.0px;font-size:11.5px;color:#6d6d6d;transform:scaleX(0.9223);">0 KB</span>
<div class="abs" id="dialog"></div>
<div class="abs" id="dlgsel"></div>
<div class="abs" id="sbtrack"></div>
<div class="abs" id="sbthumb"></div>
<div class="abs" id="sbup"></div>
<div class="abs" id="chk"></div>
<div class="abs" style="left:560px;top:352px;width:40px;height:40px;background:#008299"></div>
<div class="abs" style="left:560px;top:412px;width:40px;height:40px;background:#7a0000"></div>
<div class="abs" style="left:560px;top:472px;width:40px;height:40px;background:#2672ec"></div>
<div class="abs" style="left:560px;top:532px;width:40px;height:40px;background:#8c0095"></div>
<div class="abs" style="left:560px;top:592px;width:40px;height:40px;background:#008299"></div>
<div class="abs" style="left:560px;top:652px;width:40px;height:25px;background:#d94b27"></div>
<svg width="40" height="330" style="left:560px;top:350px" viewBox="560 350 40 330">
<defs>
<linearGradient id="npb" x1="0" y1="0" x2="0.300" y2="1"><stop offset="0" stop-color="#d9f0f6"/><stop offset="0.400" stop-color="#a9dcea"/><stop offset="1" stop-color="#6fbfd4"/></linearGradient>
<linearGradient id="cone" x1="0" y1="0" x2="1" y2="0"><stop offset="0" stop-color="#f7a23a"/><stop offset="0.500" stop-color="#fbb95a"/><stop offset="1" stop-color="#ee7d1c"/></linearGradient>
<linearGradient id="ieb" x1="0" y1="0" x2="0" y2="1"><stop offset="0" stop-color="#7fd8fb"/><stop offset="1" stop-color="#2aa6ee"/></linearGradient>
</defs>
<!-- notepad -->
<path d="M591 362.500 L593 363.400 V380.800 L589 383.500 Z" fill="#c99a3e"/>
<path d="M591 362.500 V381.500 L586.200 385 L572.500 380.500 L581.700 382 Z" fill="#eef4f6"/>
<path d="M591 362.500 L590.800 381.500 L586.200 385 L581.700 382 Z" fill="#e4eef2"/>
<path d="M572.400 364 L565 378.200 L572 380.200 Z" fill="#5fb0c2" opacity="0.800"/>
<path d="M575.300 360 L591 362.500 L581.700 382 L572 380.200 L572.400 364 Z" fill="url(#npb)"/>
<path d="M575.500 359.600 L590.800 362" stroke="#e6eef0" stroke-width="1.600" stroke-dasharray="1 0.700"/>
<!-- adobe -->
<rect x="567.700" y="418.600" width="24.500" height="24.300" fill="#2e0606" stroke="#f02a1c" stroke-width="1.600"/>
<path d="M573 438.500 Q578 436 580 428 Q581.500 422.500 580 422.500 Q578.500 422.500 580 428 Q582 434 588 435.500 Q589.500 434 586 433.500 Q580 433 573.500 437.500 Z" fill="none" stroke="#fff" stroke-width="1"/>
<!-- IE -->
<g transform="translate(568.300,480) scale(1,0.893) translate(-69.500,-711)">
<path d="M95 727.500 H75.500 Q76.500 733.500 83 733.500 Q88 733.500 90 730 L95 732.500 Q91 739 83 739 Q69.500 739 69.500 725 Q69.500 711 83 711 Q96.500 711 95 727.500 Z M75.800 722 H89.500 Q88.500 716.500 82.500 716.500 Q77 716.500 75.800 722 Z" fill="url(#ie2)" fill-rule="evenodd"/>
<path d="M69 738.500 Q62.500 731 74.500 718.500 Q86 707.500 93.500 709.500 Q97.500 712 93.500 718.500 Q95.500 712.500 91 712.500 Q83.500 713 75 721.500 Q65.500 732 69 738.500 Z" fill="url(#iering)"/>
</g>
<!-- VS -->
<path d="M587.100 537.400 L594.800 540.700 V562.700 L587.100 566.300 L577.700 557.700 L569.700 561.600 L565.400 559.100 V544.600 L569.700 542.200 L577.700 546.800 Z" fill="#68217a" stroke="#fff" stroke-width="1.400" stroke-linejoin="miter"/>
<path d="M587.800 546.100 V557 L581.300 551.500 Z" fill="#f3eaf5"/>
<path d="M569.700 547.500 V556.200 L573 551.900 Z" fill="#8c0095"/>
<!-- Paint -->
<path d="M580 601.500 Q590 600.500 591 609 Q591.500 617 584.500 620.500 Q581 622 579.500 619 Q578.500 616.500 575.500 618 Q570 620 567 616.500 Q564 611 569.500 605.500 Q574 602 580 601.500 Z" fill="#d8ecf6" stroke="#a9cfe4" stroke-width="0.600"/>
<circle cx="570.500" cy="612" r="2" fill="#e8483a"/><circle cx="574" cy="607.500" r="2" fill="#3fb54a"/><circle cx="580.500" cy="606" r="2.100" fill="#f2b83a"/><circle cx="577.500" cy="615.300" r="2.100" fill="#008299"/><circle cx="572.500" cy="616.500" r="1.300" fill="#3f86e0"/>
<path d="M579 625 L588.500 604" stroke="#e8963a" stroke-width="2.200"/>
<path d="M587.500 604.500 L588.500 598 Q591 596.500 592 599 L590.500 605.500 Z" fill="#d9b98a" stroke="#b58e55" stroke-width="0.500"/>
</svg>
<svg width="40" height="25" style="left:560px;top:652px;overflow:hidden" viewBox="560 652 40 25">
<!-- VLC -->
<path d="M580 658.500 L587 680 H573 Z" fill="url(#cone)"/>
<path d="M577.700 665.500 H582.300 L583.500 669 H576.500 Z" fill="#f3f3f3"/>
<path d="M575.200 673 H584.800 L586 676.500 H574 Z" fill="#f3f3f3"/>
</svg>
<!-- scrollbar arrows -->
<svg width="17" height="336" style="left:887px;top:341px" viewBox="887 341 17 336">
<path d="M890.300 367 L895.500 361 L900.700 367" fill="none" stroke="#444" stroke-width="2.200"/>
<path d="M890.300 652.500 L895.500 658.500 L900.700 652.500" fill="none" stroke="#444" stroke-width="2.200"/>
</svg>

<span class="t dlg" style="left:563px;top:253.5px;font-size:14.5px;color:#000;transform:scaleX(1.0097);">How do you want to open this file?</span>
<span class="t dlg" style="left:588.3px;top:293.5px;font-size:14.5px;color:#000;transform:scaleX(0.9711);">Use this app for all .resx files</span>
<span class="t dlg" style="left:609px;top:353.0px;font-size:14.5px;color:#000;transform:scaleX(1.0214);">Notepad</span>
<span class="t dlg" style="left:610px;top:413.0px;font-size:14.5px;color:#000;transform:scaleX(0.9960);">Adobe Acrobat Reader DC</span>
<span class="t dlg" style="left:609px;top:473.0px;font-size:14.5px;color:#000;">Internet Explorer</span>
<span class="t dlg" style="left:609px;top:533.0px;font-size:14.5px;color:#000;transform:scaleX(0.9928);">Microsoft Visual Studio Version Selector</span>
<span class="t dlg" style="left:609px;top:593.0px;font-size:14.5px;color:#000;transform:scaleX(0.9679);">Paint</span>
<span class="t dlg" style="left:610px;top:653.0px;font-size:14.5px;color:#000;transform:scaleX(0.9805);">VLC media player</span>
<div class="abs" id="status"></div>
<div class="abs" style="left:68px;top:688px;width:1px;height:12px;background:#ececec"></div>
<div class="abs" style="left:209px;top:688px;width:1px;height:12px;background:#ececec"></div>
<div class="abs" style="left:1057px;top:683px;width:22px;height:23px;box-sizing:border-box;border:1px solid #26a0da;background:#cce8f6"></div>
<svg width="46" height="24" style="left:1057px;top:683px" viewBox="1057 683 46 24">
<defs><linearGradient id="thumb" x1="0" y1="0" x2="0" y2="1"><stop offset="0" stop-color="#3f8fe6"/><stop offset="0.400" stop-color="#d9eefb"/><stop offset="0.650" stop-color="#2f7a4a"/><stop offset="1" stop-color="#1f5fc0"/></linearGradient></defs>
<g fill="#fff" stroke="#9aa7b5" stroke-width="0.700">
<rect x="1061.600" y="688.600" width="3.600" height="3.600" rx="0.700"/><rect x="1061.600" y="692.700" width="3.600" height="3.600" rx="0.700"/><rect x="1061.600" y="696.800" width="3.600" height="3.600" rx="0.700"/>
</g>
<rect x="1062.900" y="689.900" width="1" height="1" fill="#2f8a2f"/><rect x="1062.900" y="694" width="1" height="1" fill="#e02a1a"/><rect x="1062.900" y="698.100" width="1" height="1" fill="#2f4fe0"/>
<path d="M1067 690.500 H1071 M1072 690.500 H1076 M1067 694.500 H1071 M1072 694.500 H1076 M1067 698.500 H1071 M1072 698.500 H1076" stroke="#5f6b78" stroke-width="1.100"/>
<rect x="1083.800" y="688.700" width="12.600" height="10.600" rx="1" fill="#fdfdfd" stroke="#8d9bb5" stroke-width="0.900"/>
<rect x="1085.300" y="690.200" width="9.600" height="7.600" fill="url(#thumb)"/>
</svg>

<span class="t status" style="left:14px;top:684.0px;font-size:11.5px;color:#1f2c5c;transform:scaleX(1.0122);">10 items</span>
<span class="t status" style="left:79px;top:684.0px;font-size:11.5px;color:#1f2c5c;transform:scaleX(0.9879);">1 item selected  775 KB</span>
<div class="abs" id="taskbar"></div>
<div class="abs" id="taskbar2"></div>
<div class="abs" style="left:0;top:705px;width:913px;height:1px;background:rgba(20,15,40,0.35)"></div>
<div class="abs" style="left:914px;top:706px;width:189px;height:1px;background:rgba(20,15,40,0.18)"></div>
<div class="tbtn run" style="left:114px"></div>
<div class="tbtn run" style="left:176px"></div>
<div class="tbtn run" style="left:238px"></div>
<div class="tbtn run act" style="left:672px"></div>
<div class="abs" style="left:913px;top:705px;width:1px;height:40px;background:#c3b3c3"></div>
<svg width="310" height="41" style="left:0;top:705px" viewBox="0 705 310 41">
<defs>
<linearGradient id="ie2" x1="0" y1="0" x2="0" y2="1"><stop offset="0" stop-color="#86defc"/><stop offset="0.500" stop-color="#3cb5f2"/><stop offset="1" stop-color="#1a8fe0"/></linearGradient>
<linearGradient id="iering" x1="0" y1="1" x2="1" y2="0"><stop offset="0" stop-color="#f2a80f"/><stop offset="0.500" stop-color="#fbd43a"/><stop offset="1" stop-color="#f0a40e"/></linearGradient>
<linearGradient id="exf" x1="0" y1="0" x2="0" y2="1"><stop offset="0" stop-color="#fcf1b8"/><stop offset="0.600" stop-color="#f6e391"/><stop offset="1" stop-color="#f0d26c"/></linearGradient>
<linearGradient id="exb" x1="0" y1="0" x2="1" y2="1"><stop offset="0" stop-color="#c9ecfb"/><stop offset="0.500" stop-color="#7fcaf0"/><stop offset="1" stop-color="#4fa6e0"/></linearGradient>
</defs>
<!-- start -->
<g fill="#fff">
<path d="M11.700 714.700 L23 713.500 V724 H11.700 Z"/>
<path d="M24.200 713.300 L38.300 711.400 V724 H24.200 Z"/>
<path d="M11.700 725.200 H23 V734.800 L11.700 733 Z"/>
<path d="M24.200 725.200 H38.300 V737.500 L24.200 735.200 Z"/>
</g>
<!-- IE -->
<path d="M95 727.500 H75.500 Q76.500 733.500 83 733.500 Q88 733.500 90 730 L95 732.500 Q91 739 83 739 Q69.500 739 69.500 725 Q69.500 711 83 711 Q96.500 711 95 727.500 Z M75.800 722 H89.500 Q88.500 716.500 82.500 716.500 Q77 716.500 75.800 722 Z" fill="url(#ie2)" fill-rule="evenodd"/>
<path d="M69 738.500 Q62.500 731 74.500 718.500 Q86 707.500 93.500 709.500 Q97.500 712 93.500 718.500 Q95.500 712.500 91 712.500 Q83.500 713 75 721.500 Q65.500 732 69 738.500 Z" fill="url(#iering)"/>
<!-- Outlook -->
<path d="M128 712.900 L146.200 709.800 V739.900 L128 736.800 Z" fill="#0072c6"/>
<rect x="146.200" y="717.300" width="11.300" height="15" rx="1" fill="#fff" stroke="#0072c6" stroke-width="1.200"/>
<path d="M146.500 723.300 L149.600 726.800 L157.300 718.600" fill="none" stroke="#0072c6" stroke-width="1.900"/>
<ellipse cx="137.100" cy="724.800" rx="4" ry="5" fill="none" stroke="#fff" stroke-width="2.500"/>
<!-- Explorer -->
<path d="M190 738.500 V715 L191.500 712 H205 L206.500 715 V738.500 Z" fill="#f5e190" stroke="#d9b650" stroke-width="0.700"/>
<rect x="192.800" y="713" width="3.200" height="2" fill="#12c024"/><rect x="196" y="713" width="6" height="2" fill="#fff"/>
<path d="M199.500 738.500 V717 L201 714.200 H219 L220.300 717 V738.500 Z" fill="#f3dc84" stroke="#d9b650" stroke-width="0.700"/>
<rect x="201" y="715" width="3" height="2" fill="#e0301e"/><rect x="204" y="715" width="6.500" height="2" fill="#fff"/>
<path d="M189.300 738.800 V719.500 H205.500 L207.500 716.700 H220 L220.800 719.500 V738.800 Z" fill="url(#exf)" stroke="#dcb84e" stroke-width="0.800"/>
<rect x="209" y="717.300" width="3" height="2" fill="#1e90f0"/><rect x="212" y="717.300" width="5" height="2" fill="#fff"/>
<path d="M190.500 738 V720.500 H206" fill="none" stroke="#fff8d8" stroke-width="0.900"/>
<path d="M193 741 V730 Q193 728 195 728 H215 Q217 728 217 730 V741 H210.500 V734.500 H199.500 V741 Z" fill="url(#exb)" stroke="#2f8fd6" stroke-width="0.800"/>
<path d="M194 740 V730.500 Q194 729 195.500 729 H214.500 Q216 729 216 730.500" fill="none" stroke="#dff3fd" stroke-width="0.800" opacity="0.900"/>
<path d="M196.500 722 V736 M191.500 730 H202 M193.500 733 L200.500 726" stroke="#fff" stroke-width="0.700" opacity="0.800"/>
<circle cx="196.500" cy="730" r="1.800" fill="#fff" opacity="0.900"/>
<!-- Chrome -->
<circle cx="266.800" cy="725" r="14.500" fill="#db4437"/>
<path d="M266.800 725 L254.200 717.800 A14.500 14.500 0 0 0 259.600 737.600 Z" fill="#0f9d58"/>
<path d="M254.300 717.600 A14.500 14.500 0 0 0 259.500 737.500 L266.800 725 Z" fill="#0f9d58"/>
<path d="M266.800 725 L259.500 737.600 A14.500 14.500 0 0 0 281.300 725 A14.500 14.500 0 0 0 279.400 717.800 Z" fill="#ffcd40"/>
<path d="M266.800 725 L279.400 717.800 H266.800 Z" fill="#db4437"/>
<path d="M254.200 717.800 L260.500 728.600 L266.800 725 Z" fill="#0f9d58"/>
<path d="M266.800 718.400 H279.600 A14.500 14.500 0 0 1 266 739.500 L272.500 728.300 Z" fill="#ffcd40"/>
<path d="M254.200 717.800 A14.500 14.500 0 0 0 266 739.500 L272.500 728.300 L261.100 728.300 Z" fill="#0f9d58"/>
<path d="M254.200 717.800 A14.500 14.500 0 0 1 279.600 718.400 H266.800 L261.100 728.300 Z" fill="#db4437"/>
<circle cx="266.800" cy="725" r="6.600" fill="#f1f1f1"/>
<circle cx="266.800" cy="725" r="5.300" fill="#4285f4"/>
</svg>
<svg width="300" height="41" style="left:300px;top:705px" viewBox="300 705 300 41">
<defs>
<linearGradient id="mon" x1="0" y1="0" x2="1" y2="1"><stop offset="0" stop-color="#2c58f0"/><stop offset="0.450" stop-color="#0b2ccc"/><stop offset="1" stop-color="#0a1f9a"/></linearGradient>
<linearGradient id="rdpl" x1="0" y1="0" x2="1" y2="1"><stop offset="0" stop-color="#c3d3ff"/><stop offset="0.600" stop-color="#8fa8f8"/><stop offset="1" stop-color="#3f5fe0"/></linearGradient>
<linearGradient id="silv" x1="0" y1="0" x2="0" y2="1"><stop offset="0" stop-color="#f4f4f4"/><stop offset="1" stop-color="#a9aeb4"/></linearGradient>
<linearGradient id="gold" x1="0" y1="0" x2="1" y2="0"><stop offset="0" stop-color="#f7c23a"/><stop offset="0.400" stop-color="#fbe08a"/><stop offset="1" stop-color="#d98a0a"/></linearGradient>
<linearGradient id="calc" x1="0" y1="0" x2="0" y2="1"><stop offset="0" stop-color="#e9f5fe"/><stop offset="1" stop-color="#9fd0f7"/></linearGradient>
<linearGradient id="srv" x1="0" y1="0" x2="1" y2="0"><stop offset="0" stop-color="#e9e9e9"/><stop offset="0.600" stop-color="#b9bcc0"/><stop offset="1" stop-color="#8d9196"/></linearGradient>
<radialGradient id="glb" cx="0.400" cy="0.350" r="0.700"><stop offset="0" stop-color="#6fb6f5"/><stop offset="1" stop-color="#1a4fc0"/></radialGradient>
</defs>
<!-- RDP -->
<ellipse cx="326.400" cy="736" rx="6.800" ry="3.400" fill="#e4e4e4" stroke="#bdbdbd" stroke-width="0.500"/>
<path d="M323.500 729 H330 L331 736 H322.500 Z" fill="#d2d2d2"/>
<path d="M316.500 709.700 L341.300 712.700 L339.600 731 L314.500 728 Z" fill="#0a0ac8" stroke="#d9d9d2" stroke-width="1.500" stroke-linejoin="round"/>
<path d="M327 711.800 L340.300 713.400 L338.800 729.800 L329.500 728.700 Z" fill="url(#rdpl)"/>
<path d="M317.300 711 L318.800 719.500 L315.800 726.800 Z" fill="#6f8ff0" opacity="0.600"/>
<circle cx="337.100" cy="733" r="6.900" fill="url(#silv)" stroke="#9a9a9a" stroke-width="0.800"/>
<circle cx="337.100" cy="733" r="5.800" fill="#f7f7f7"/>
<path d="M333.300 732.200 L336.300 734.700 L333.300 737.300 M340.800 728.700 L337.800 731.200 L340.800 733.700" fill="none" stroke="#2d9a1d" stroke-width="1.700"/>
<!-- SQL tool -->
<path d="M376 712 V720.500 Q376 722.500 380.800 722.500 Q385.600 722.500 385.600 720.500 V712 Z" fill="url(#gold)"/>
<ellipse cx="380.800" cy="712" rx="4.800" ry="2" fill="#fbe79a" stroke="#e0a52a" stroke-width="0.500"/>
<path d="M390.500 711 H400.500 V721" fill="none" stroke="#3fae2f" stroke-width="1.800" stroke-dasharray="1.800 1.400"/>
<path d="M377 727 V734 H387" fill="none" stroke="#3fae2f" stroke-width="1.800" stroke-dasharray="1.800 1.400"/>
<path d="M388 740.500 L402 724" stroke="#e8a82a" stroke-width="2.600" stroke-linecap="round"/>
<path d="M397.500 722 Q401.500 720.500 406.500 727 L404.500 729.500 Q402 726.500 399 727.500 Z" fill="#c5cad2" stroke="#8d9196" stroke-width="0.500"/>
<path d="M388 726.500 L403 741" stroke="#d5d9de" stroke-width="2.600" stroke-linecap="round"/>
<path d="M385.500 723.500 Q387.500 722 389.500 723 L387.500 725.500 L389.500 727.500 L392 725.500 Q392.500 728.500 390 729.500 Q387 730 385.500 727.500 Q384.500 725.500 385.500 723.500 Z" fill="#d5d9de" stroke="#8d9196" stroke-width="0.500"/>
<!-- CMD -->
<rect x="437.500" y="712.500" width="29" height="24" fill="#000" stroke="#b5b5b5" stroke-width="1"/>
<rect x="438" y="713" width="28" height="2" fill="#c9c9c9"/>
<text x="440.500" y="725" font-family="Liberation Mono, monospace" font-size="7.500" font-weight="700" fill="#fff">C:\</text>
<rect x="455" y="724" width="8" height="1.300" fill="#fff"/>
<!-- Calc -->
<rect x="503.500" y="710.500" width="22" height="29" rx="1.500" fill="url(#calc)" stroke="#7fb9ea" stroke-width="1"/>
<rect x="505" y="712" width="19" height="2" fill="#f7a83a"/>
<rect x="505.500" y="715.500" width="18" height="7" fill="#eef7fe" stroke="#8dbbe0" stroke-width="0.700"/>
<text x="517.500" y="721.500" font-family="Liberation Mono, monospace" font-size="7" font-weight="700" fill="#3a4a7a">0</text>
<g fill="#fff">
<rect x="506" y="726" width="2.600" height="2.300"/><rect x="509.700" y="726" width="2.600" height="2.300"/><rect x="513.400" y="726" width="2.600" height="2.300"/><rect x="517.100" y="726" width="2.600" height="2.300"/><rect x="520.800" y="726" width="2.600" height="2.300"/>
<rect x="506" y="729.500" width="2.600" height="2.300"/><rect x="509.700" y="729.500" width="2.600" height="2.300"/><rect x="513.400" y="729.500" width="2.600" height="2.300"/><rect x="517.100" y="729.500" width="2.600" height="2.300"/><rect x="520.800" y="729.500" width="2.600" height="2.300"/>
<rect x="506" y="733" width="2.600" height="2.300"/><rect x="509.700" y="733" width="2.600" height="2.300"/><rect x="513.400" y="733" width="2.600" height="2.300"/><rect x="517.100" y="733" width="2.600" height="2.300"/>
<rect x="506" y="736.300" width="2.600" height="2"/><rect x="509.700" y="736.300" width="2.600" height="2"/><rect x="513.400" y="736.300" width="2.600" height="2"/><rect x="517.100" y="736.300" width="2.600" height="2"/>
</g>
<rect x="520.800" y="733" width="2.600" height="5.300" fill="#f08a1a"/>
<!-- globe + server -->
<circle cx="572.300" cy="721.500" r="10.300" fill="url(#glb)"/>
<path d="M565 716 Q569 713 572 716 Q574 719 571 721 Q567 721 565 724 Q563 720 565 716 Z M571 725 Q575 724 577 727 Q576 731 572 731.500 Q569 729 571 725 Z M576 713 Q580 714 581 718 Q578 718 576 713 Z" fill="#3fb53f"/>
<path d="M562 711 Q566 708.500 570 711.500 L575 715.500 L577 713 L578.500 721.500 L570 720.500 L572.500 718.500 L567.500 714.500 Q565 713 563.500 714 Z" fill="#f7a81a" stroke="#d98a0a" stroke-width="0.500"/>
<path d="M577.500 718 L586 716.500 L592 718 V736 L585 740 L577.500 737.500 Z" fill="url(#srv)" stroke="#7d8186" stroke-width="0.500"/>
<path d="M585.500 719 V739.500" stroke="#8d9196" stroke-width="0.600"/>
<path d="M579 721 L584.500 722 M579 723.500 L584.500 724.500 M579 726 L584.500 727 M579 728.500 L584.500 729.500" stroke="#6d7176" stroke-width="0.900"/>
<rect x="580" y="734.500" width="1.600" height="1.600" fill="#4fd03a"/>
</svg>

<svg width="503" height="41" style="left:600px;top:705px" viewBox="600 705 503 41">
<defs>
<radialGradient id="ffg" cx="0.350" cy="0.250" r="0.800"><stop offset="0" stop-color="#58a6ee"/><stop offset="0.500" stop-color="#1f4fb0"/><stop offset="1" stop-color="#0f2670"/></radialGradient>
<linearGradient id="fox2" x1="0" y1="0" x2="0.600" y2="1"><stop offset="0" stop-color="#fba62a"/><stop offset="0.500" stop-color="#f0701a"/><stop offset="1" stop-color="#e2481a"/></linearGradient>
<linearGradient id="fox" x1="0" y1="0" x2="1" y2="1"><stop offset="0" stop-color="#fbc52a"/><stop offset="0.400" stop-color="#f58a1a"/><stop offset="1" stop-color="#e2511a"/></linearGradient>
<linearGradient id="npp" x1="0" y1="0" x2="0" y2="1"><stop offset="0" stop-color="#ffffff"/><stop offset="0.350" stop-color="#f4fbd0"/><stop offset="0.600" stop-color="#b5e04a"/><stop offset="1" stop-color="#2f9a1a"/></linearGradient>
<linearGradient id="pal" x1="0" y1="0" x2="1" y2="1"><stop offset="0" stop-color="#eef7fd"/><stop offset="1" stop-color="#9fcdf0"/></linearGradient>
</defs>
<!-- Firefox -->
<circle cx="639" cy="725.300" r="14.700" fill="url(#fox)"/>
<circle cx="641.300" cy="721.300" r="10.700" fill="url(#ffg)"/>
<path d="M625.500 718 Q627 712.500 631.500 711.500 Q631 714 633 716.500 Q637.500 716.500 640.500 719.500 Q644.500 720.500 645 723.500 Q643 727.500 638 727 Q634 729 636.500 732.500 Q641 735.500 646 733.500 Q650 731.500 651.500 727 Q653 733 648 737.500 Q641 741.500 633 738.500 Q625 733.500 625.500 718 Z" fill="url(#fox2)"/>
<path d="M649.500 712.800 Q655.500 718.500 653.700 728 Q652.500 732.500 650.500 734.500 Q652.500 727.500 651.300 721.500 Q650.800 716.500 649.500 712.800 Z" fill="#fcd43a"/>
<!-- VS -->
<path d="M709.600 709.500 L716.700 712.800 V737.500 L709.600 740.700 L696.500 729 L690 733.800 L685.500 731.500 V718.500 L690 716.200 L696.500 721 Z" fill="#68217a" stroke="#fff" stroke-width="2.200" stroke-linejoin="miter"/>
<path d="M709.800 718.500 V731.500 L701.500 725 Z" fill="#fff"/>
<path d="M690.300 721.500 V728.500 L693.500 725 Z" fill="#fff"/>
<!-- Snipping -->
<ellipse cx="760" cy="727" rx="10" ry="6.500" fill="#e9d5dc" opacity="0.550" transform="rotate(-12 760 727)"/>
<ellipse cx="760.500" cy="718.500" rx="11" ry="8" fill="#fdfdfd" stroke="#e0312a" stroke-width="1.400" transform="rotate(-10 760.500 718.500)"/>
<path d="M753.500 712.500 L768 731 M763 710.500 L765.500 731" stroke="#6d7278" stroke-width="1.800" stroke-linecap="round"/>
<ellipse cx="772.500" cy="731.500" rx="5" ry="2.700" fill="none" stroke="#2a8fe0" stroke-width="2" transform="rotate(35 772.500 731.500)"/>
<ellipse cx="765.500" cy="735.500" rx="2.700" ry="5" fill="none" stroke="#2a8fe0" stroke-width="2" transform="rotate(5 765.500 735.500)"/>
<!-- Paint -->
<path d="M824 715.500 Q836 714 837.500 723 Q838 732 829.500 736.500 Q825 738.500 823.500 735 Q822.500 732 819 733.500 Q812.500 735.500 809.800 731 Q807.500 725 813.500 719.500 Q818 716 824 715.500 Z" fill="url(#pal)" stroke="#8dbfe6" stroke-width="0.700"/>
<circle cx="814.500" cy="726" r="2.300" fill="#e8483a"/><circle cx="818.500" cy="721" r="2.300" fill="#3fb54a"/><circle cx="825.500" cy="719.500" r="2.300" fill="#f2b83a"/><circle cx="821.500" cy="729.500" r="2.400" fill="#7d6a86"/>
<path d="M825 740 L834.500 719" stroke="#f0963a" stroke-width="2.400" stroke-linecap="round"/>
<path d="M833.200 719.500 L834 712 Q837 709.500 838.500 712.500 L836.800 720.500 Z" fill="#e2c79a" stroke="#b58e55" stroke-width="0.500"/>
<!-- Notepad++ -->
<path d="M873 710 H890 L896 715 V740 H873 Z" fill="url(#npp)" stroke="#f4f4f4" stroke-width="0.800"/>
<path d="M890 710 V715 H896 Z" fill="#d9d9d9"/>
<path d="M874 712.500 H889 M874 714.500 H889 M874 716.500 H895 M874 718.500 H895" stroke="#cfd9e6" stroke-width="0.600"/>
<path d="M874.500 711 h14" stroke="#8d8d8d" stroke-width="0.800" stroke-dasharray="0.800 0.800"/>
<path d="M877 730 V721.500 Q877 719.500 878.500 719.500 Q880 719.500 880 721.500 V730" fill="none" stroke="#111" stroke-width="1.300"/>
<path d="M881.500 725 H885.500 M883.500 723 V727 M886.500 725 H890.500 M888.500 723 V727" stroke="#111" stroke-width="1"/>
<path d="M888.500 734 L900.500 712.500" stroke="#f0a81a" stroke-width="2.800"/>
<path d="M888 735.500 L887.700 732.800 L890 734.200 Z" fill="#333"/>
<path d="M899.300 712.300 L900.300 710.300 L902.500 711.500 L901.500 713.500 Z" fill="#d8312a"/>
<path d="M898.500 713.800 L899.400 712.200 L901.600 713.400 L900.700 715 Z" fill="#9aa0a8"/>
<!-- tray -->
<path d="M919.700 729.300 L923.700 724.600 L927.700 729.300 Z" fill="#fff"/>
<path d="M941 723.500 H944 L948.500 719.500 V734 L944 730 H941 Z" fill="#fff" stroke="#5a4a5a" stroke-width="0.500"/>
<path d="M950.500 723.500 Q952.500 726.700 950.500 730 M952.800 721.500 Q956.300 726.700 952.800 732" fill="none" stroke="#fff" stroke-width="1.300"/>
<path d="M965.500 719 V734.500" stroke="#fff" stroke-width="1.800"/>
<path d="M967 720 Q970.500 718.500 973 720.500 Q976 722.500 979.500 721 Q977.500 724 978.500 727 Q975.500 728.500 972.500 726.500 Q970 725 967 726.500 Z" fill="#fff"/>
<rect x="988.500" y="719.500" width="5" height="8" rx="1" fill="none" stroke="#fff" stroke-width="1.400"/>
<rect x="990.300" y="721.500" width="1.500" height="2.500" fill="#fff"/>
<path d="M991 727.500 V730.500 H995" fill="none" stroke="#fff" stroke-width="1.200"/>
<rect x="994.800" y="722" width="8" height="7" fill="none" stroke="#fff" stroke-width="1.500"/>
<path d="M998.800 729.500 V732 M995.500 732.700 H1002.500" stroke="#fff" stroke-width="1.500"/>
</svg>


<span class="t task" style="left:1041.5px;top:709.0px;font-size:11.5px;color:#fff;transform:scaleX(0.9690);">1:10 PM</span>
<span class="t task" style="left:1039px;top:725.5px;font-size:11.5px;color:#fff;transform:scaleX(1.0276);">2/6/2017</span>
</body>
</html>
